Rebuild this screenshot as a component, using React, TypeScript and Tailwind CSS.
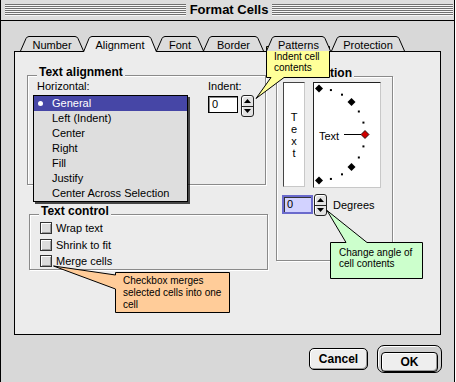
import React from 'react';

const FONT = "font-['Liberation_Sans',Arial,sans-serif]";

function Tab({ label, w, active, className }: { label: string; w: number; active?: boolean; className: string }) {
  const bottom = active ? 16 : 15;
  const edge = `M0.5 ${bottom} L6 2.5 Q7 0.5 9 0.5 H${w - 9} Q${w - 7} 0.5 ${w - 6} 2.5 L${w - 0.5} ${bottom}`;
  return (
    <div className={`relative h-[16px] flex justify-center pt-[2px] ${active ? 'z-10' : ''} ${className}`}>
      <svg className="absolute left-0 top-0" width={w} height={16}>
        <path d={`${edge} Z`} fill={active ? '#ececec' : '#dcdcdc'} />
        <path d={edge} fill="none" stroke="#000" />
      </svg>
      <span className="relative text-[11px] leading-[14px]">{label}</span>
    </div>
  );
}

function Spinner() {
  return (
    <div className="w-[13px] h-[22px] rounded-[3px] border border-[#222] bg-[#e2e2e2] flex flex-col shadow-[inset_1px_1px_0_#fff]">
      <div className="flex-1 flex items-center justify-center border-b border-[#222]">
        <svg width="7" height="4"><path d="M3.5 0 L7 4 H0 Z" fill="#000" /></svg>
      </div>
      <div className="flex-1 flex items-center justify-center">
        <svg width="7" height="4"><path d="M0 0 H7 L3.5 4 Z" fill="#000" /></svg>
      </div>
    </div>
  );
}

function Group({ label, className, children }: { label: string; className: string; children: React.ReactNode }) {
  return (
    <div className={`relative border border-[#8a8a8a] shadow-[inset_1px_1px_0_#fff,1px_1px_0_#fff] ${className}`}>
      <span className="absolute -top-[11px] left-[9px] px-[2px] bg-[#ececec] text-[12px] font-bold leading-[14px]">{label}</span>
      {children}
    </div>
  );
}

function Check({ label, className }: { label: string; className: string }) {
  return (
    <div className={`flex items-center ${className}`}>
      <span className="w-[12px] h-[12px] border border-[#333] bg-[#dcdcdc] shadow-[inset_1px_1px_0_#fff,inset_-1px_-1px_0_#999]" />
      <span className="ml-[4px] text-[11px] leading-[14px]">{label}</span>
    </div>
  );
}

const items = ['Left (Indent)', 'Center', 'Right', 'Fill', 'Justify', 'Center Across Selection'];

function Dial() {
  const cx = 5;
  const cy = 51.5;
  const r = 46;
  const marks = [];
  for (let a = 90; a >= -90; a -= 15) {
    const rad = (a * Math.PI) / 180;
    const x = cx + r * Math.cos(rad);
    const y = cy - r * Math.sin(rad);
    if (a === 0) {
      marks.push(<path key={a} d={`M${x} ${y - 4} L${x + 4} ${y} L${x} ${y + 4} L${x - 4} ${y} Z`} fill="#d00000" stroke="#000" strokeWidth="0.8" />);
    } else if (a % 45 === 0) {
      marks.push(<path key={a} d={`M${x} ${y - 4} L${x + 4} ${y} L${x} ${y + 4} L${x - 4} ${y} Z`} fill="#000" />);
    } else {
      marks.push(<rect key={a} x={x - 1} y={y - 1} width="2" height="2" fill="#000" />);
    }
  }
  return (
    <svg width="66" height="104">
      <line x1="30" y1={cy} x2="47" y2={cy} stroke="#000" />
      {marks}
      <text x="5" y="57" fontSize="11" fontFamily="'Liberation Sans', Arial, sans-serif" fill="#000">Text</text>
    </svg>
  );
}

export default function App() {
  return (
    <div className={`relative w-[456px] h-[382px] overflow-hidden bg-white text-black ${FONT}`}>
      <div className="w-[455px] h-[382px] border-x border-black bg-[#d8d8d8] flex flex-col">
        {/* title bar */}
        <div className="h-[21px] shrink-0 bg-[#dddddd] border-b border-black flex items-center pl-[4px] pr-[1px]">
          <div className="flex-1 h-[12px] bg-[repeating-linear-gradient(to_bottom,#707070_0px,#707070_1px,#f6f6f6_1px,#f6f6f6_2px)]" />
          <span className="px-[4px] text-[13px] font-bold leading-[16px]">Format Cells</span>
          <div className="flex-1 h-[12px] bg-[repeating-linear-gradient(to_bottom,#707070_0px,#707070_1px,#f6f6f6_1px,#f6f6f6_2px)]" />
        </div>

        <div className="flex-1 flex flex-col pl-[13px] pt-[15px]">
          {/* tabs */}
          <div className="relative z-10 flex h-[16px]">
            <Tab label="Number" w={64} className="w-[64px] ml-[6px]" />
            <Tab label="Alignment" w={74} active className="w-[74px] -ml-px" />
            <Tab label="Font" w={48} className="w-[48px] -ml-px" />
            <Tab label="Border" w={61} className="w-[61px] -ml-px" />
            <Tab label="Patterns" w={65} className="w-[65px] ml-[2px]" />
            <Tab label="Protection" w={74} className="w-[74px]" />
          </div>

          {/* panel */}
          <div className="-mt-px w-[427px] h-[284px] border border-black bg-[#ececec] flex pt-[23px] pl-[12px] text-[11px] leading-[14px]">
            <div className="flex flex-col w-[241px]">
              <Group label="Text alignment" className="w-[239px] h-[110px]">
                <div className="flex pt-[3px] pl-[9px]">
                  <div className="w-[171px]">Horizontal:</div>
                  <div className="flex flex-col">
                    <span>Indent:</span>
                    <div className="flex items-start mt-[3px]">
                      <div className="w-[30px] h-[17px] border border-black bg-white shadow-[inset_1px_1px_0_#888] pl-[3px] leading-[15px]">0</div>
                      <div className="ml-[3px] -mt-px"><Spinner /></div>
                    </div>
                  </div>
                </div>
                {/* open popup menu */}
                <div className="absolute left-[5px] top-[19px] w-[155px] h-[107px] border border-black bg-[#dedede] shadow-[2px_2px_0_rgba(0,0,0,0.7)] flex flex-col">
                  <div className="h-[15px] flex items-center pl-[4px] bg-[#4646a6] text-white">
                    <span className="w-[5px] h-[5px] rounded-full bg-white" />
                    <span className="ml-[9px] leading-[15px]">General</span>
                  </div>
                  {items.map((t) => (
                    <div key={t} className="h-[15px] pl-[18px] leading-[15px]">{t}</div>
                  ))}
                </div>
              </Group>

              <Group label="Text control" className="mt-[29px] ml-[2px] w-[239px] h-[56px]">
                <div className="flex flex-col pt-[4px] pl-[10px]">
                  <Check label="Wrap text" className="h-[17px]" />
                  <Check label="Shrink to fit" className="h-[17px]" />
                  <Check label="Merge cells" className="h-[15px]" />
                </div>
              </Group>
            </div>

            <Group label="Orientation" className="ml-[8px] mt-[1px] w-[117px] h-[185px]">
              <div className="flex pt-[5px] pl-[6px]">
                <div className="w-[22px] h-[105px] bg-white border-l border-t border-[#444] border-r-[#c8c8c8] border-b-[#c8c8c8] border-r border-b flex flex-col items-center justify-center leading-[12px]">
                  <span>T</span>
                  <span>e</span>
                  <span>x</span>
                  <span>t</span>
                </div>
                <div className="ml-[8px] w-[68px] h-[106px] bg-white border-l border-t border-[#222] border-r border-b border-r-[#c8c8c8] border-b-[#c8c8c8]">
                  <Dial />
                </div>
              </div>
              <div className="flex items-start mt-[6px] pl-[5px]">
                <div className="mt-[1px] w-[31px] h-[19px] border-2 border-[#6a6acc] bg-[#d2d2ff] shadow-[inset_1px_1px_0_#333] pl-[3px] leading-[15px]">0</div>
                <div className="ml-[1px]"><Spinner /></div>
                <span className="ml-[6px] mt-[4px]">Degrees</span>
              </div>
            </Group>
          </div>

          {/* buttons */}
          <div className="flex justify-end items-center gap-[9px] mt-[10px] pr-[12px]">
            <button className="w-[59px] h-[22px] rounded-[5px] border border-black bg-[#eeeeee] shadow-[inset_1px_1px_0_#fff,inset_-1px_-1px_0_#999] text-[12px] font-bold leading-[14px]">Cancel</button>
            <div className="w-[65px] h-[28px] rounded-[7px] border border-black bg-[#cfcfcf] p-[3px] shadow-[inset_1px_1px_0_#fff]">
              <button className="w-full h-full rounded-[4px] border border-black bg-[#eeeeee] shadow-[inset_1px_1px_0_#fff,inset_-1px_-1px_0_#999] text-[12px] font-bold leading-[14px]">OK</button>
            </div>
          </div>
        </div>
      </div>

      {/* callouts */}
      <svg className="absolute left-0 top-0 pointer-events-none" width="456" height="382">
        <path d="M266.5 46.5 H329.5 V77.5 H284 L256 98.5 L271 77.5 H266.5 Z" fill="#ffff99" stroke="#000" />
        <path d="M330.5 242.5 H346 L327 210.5 L367 242.5 H422.5 V278.5 H330.5 Z" fill="#ccffcc" stroke="#000" />
        <path d="M115.5 272.5 H229.5 V312.5 H115.5 V289 L53.5 266 L115.5 275 Z" fill="#ffcc99" stroke="#000" />
      </svg>
      <div className="absolute left-[274px] top-[51px] text-[10px] leading-[11px]">
        <div>Indent cell</div>
        <div>contents</div>
      </div>
      <div className="absolute left-[339px] top-[247px] text-[10px] leading-[11px]">
        <div>Change angle of</div>
        <div>cell contents</div>
      </div>
      <div className="absolute left-[123px] top-[275px] text-[10px] leading-[12px]">
        <div>Checkbox merges</div>
        <div>selected cells into one</div>
        <div>cell</div>
      </div>
    </div>
  );
}
